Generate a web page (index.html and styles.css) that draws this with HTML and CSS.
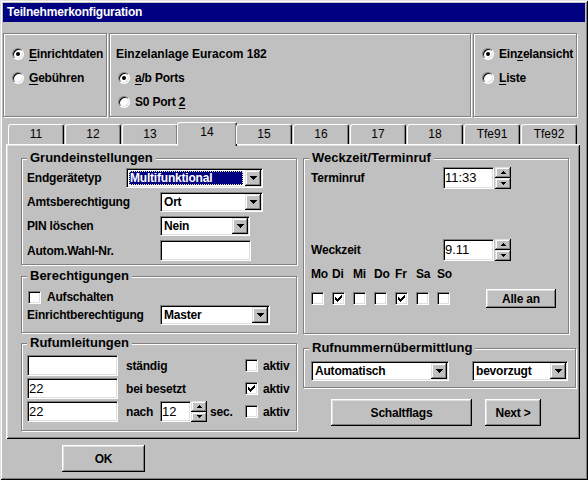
FILE: index.html
```html
<!DOCTYPE html>
<html lang="de">
<head>
<meta charset="utf-8">
<title>Teilnehmerkonfiguration</title>
<link rel="stylesheet" href="styles.css">
</head>
<body>
<div class="win">
  <div class="title">Teilnehmerkonfiguration</div>

  <div class="top">
    <div class="etch tg tg1">
      <div class="opt"><span class="radio on"></span><span><u>E</u>inrichtdaten</span></div>
      <div class="opt"><span class="radio"></span><span><u>G</u>ebühren</span></div>
    </div>
    <div class="etch tg tg2">
      <div class="opt head"><span>Einzelanlage Euracom 182</span></div>
      <div class="opt sub"><span class="radio on"></span><span><u>a</u>/b Ports</span></div>
      <div class="opt sub"><span class="radio"></span><span>S0 Port <u>2</u></span></div>
    </div>
    <div class="etch tg tg3">
      <div class="opt"><span class="radio on"></span><span>Ein<u>z</u>elansicht</span></div>
      <div class="opt"><span class="radio"></span><span><u>L</u>iste</span></div>
    </div>
  </div>

  <div class="tabs">
    <div class="tab">11</div>
    <div class="tab">12</div>
    <div class="tab">13</div>
    <div class="tab sel">14</div>
    <div class="tab">15</div>
    <div class="tab">16</div>
    <div class="tab">17</div>
    <div class="tab">18</div>
    <div class="tab">Tfe91</div>
    <div class="tab">Tfe92</div>
  </div>

  <div class="panel">
    <div class="col lcol">
      <fieldset class="g1">
        <legend>Grundeinstellungen</legend>
        <div class="rows">
          <div class="row"><span class="lab w99">Endgerätetyp</span>
            <div class="combo" style="width:137px"><span class="val sel">Multifunktional</span><span class="dd"><svg width="7" height="4" viewBox="0 0 7 4"><path d="M0 0h7v1H0zM1 1h5v1H1zM2 2h3v1H2zM3 3h1v1H3z"/></svg></span></div>
          </div>
          <div class="row"><span class="lab w133">Amtsberechtigung</span>
            <div class="combo" style="width:103px"><span class="val">Ort</span><span class="dd"><svg width="7" height="4" viewBox="0 0 7 4"><path d="M0 0h7v1H0zM1 1h5v1H1zM2 2h3v1H2zM3 3h1v1H3z"/></svg></span></div>
          </div>
          <div class="row"><span class="lab w133">PIN löschen</span>
            <div class="combo" style="width:90px"><span class="val">Nein</span><span class="dd"><svg width="7" height="4" viewBox="0 0 7 4"><path d="M0 0h7v1H0zM1 1h5v1H1zM2 2h3v1H2zM3 3h1v1H3z"/></svg></span></div>
          </div>
          <div class="row r21"><span class="lab w133">Autom.Wahl-Nr.</span>
            <div class="edit" style="width:91px"></div>
          </div>
        </div>
      </fieldset>

      <fieldset class="g2">
        <legend>Berechtigungen</legend>
        <div class="row r16"><span class="cb ml1"></span><span class="cbl">Aufschalten</span></div>
        <div class="row"><span class="lab w133">Einrichtberechtigung</span>
          <div class="combo" style="width:110px"><span class="val">Master</span><span class="dd"><svg width="7" height="4" viewBox="0 0 7 4"><path d="M0 0h7v1H0zM1 1h5v1H1zM2 2h3v1H2zM3 3h1v1H3z"/></svg></span></div>
        </div>
      </fieldset>

      <fieldset class="g3">
        <legend>Rufumleitungen</legend>
        <div class="rows r-gap2">
          <div class="row r21">
            <div class="edit" style="width:91px"></div>
            <span class="rlab">ständig</span>
            <span class="cb"></span><span class="cbl">aktiv</span>
          </div>
          <div class="row r21">
            <div class="edit" style="width:91px">22</div>
            <span class="rlab">bei besetzt</span>
            <span class="cb"><svg width="7" height="7" viewBox="0 0 7 7"><path d="M0 2h1v3H0zM1 3h1v3H1zM2 4h1v3H2zM3 3h1v3H3zM4 2h1v3H4zM5 1h1v3H5zM6 0h1v3H6z"/></svg></span><span class="cbl">aktiv</span>
          </div>
          <div class="row r21">
            <div class="edit" style="width:91px">22</div>
            <span class="nach">nach</span>
            <div class="edit" style="width:31px">12</div>
            <div class="spin"><span class="sb"><svg width="5" height="3" viewBox="0 0 5 3"><path d="M2 0h1v1H2zM1 1h3v1H1zM0 2h5v1H0z"/></svg></span><span class="sb"><svg width="5" height="3" viewBox="0 0 5 3"><path d="M0 0h5v1H0zM1 1h3v1H1zM2 2h1v1H2z"/></svg></span></div>
            <span class="sec">sec.</span>
            <span class="cb"></span><span class="cbl">aktiv</span>
          </div>
        </div>
      </fieldset>
    </div>

    <div class="col rcol">
      <fieldset class="wz">
        <legend>Weckzeit/Terminruf</legend>
        <div class="row r22 ml2"><span class="lab w132">Terminruf</span>
          <div class="edit" style="width:51px">11:33</div>
          <div class="spin ml1"><span class="sb"><svg width="5" height="3" viewBox="0 0 5 3"><path d="M2 0h1v1H2zM1 1h3v1H1zM0 2h5v1H0z"/></svg></span><span class="sb"><svg width="5" height="3" viewBox="0 0 5 3"><path d="M0 0h5v1H0zM1 1h3v1H1zM2 2h1v1H2z"/></svg></span></div>
        </div>
        <div class="row r22 ml2 wk"><span class="lab w132">Weckzeit</span>
          <div class="edit" style="width:51px">9.11</div>
          <div class="spin ml1"><span class="sb"><svg width="5" height="3" viewBox="0 0 5 3"><path d="M2 0h1v1H2zM1 1h3v1H1zM0 2h5v1H0z"/></svg></span><span class="sb"><svg width="5" height="3" viewBox="0 0 5 3"><path d="M0 0h5v1H0zM1 1h3v1H1zM2 2h1v1H2z"/></svg></span></div>
        </div>
        <div class="days ml2">
          <span>Mo</span><span>Di</span><span>Mi</span><span>Do</span><span>Fr</span><span>Sa</span><span>So</span>
        </div>
        <div class="dayrow ml2">
          <div class="days dchk">
            <span class="cb"></span>
            <span class="cb"><svg width="7" height="7" viewBox="0 0 7 7"><path d="M0 2h1v3H0zM1 3h1v3H1zM2 4h1v3H2zM3 3h1v3H3zM4 2h1v3H4zM5 1h1v3H5zM6 0h1v3H6z"/></svg></span>
            <span class="cb"></span>
            <span class="cb"></span>
            <span class="cb"><svg width="7" height="7" viewBox="0 0 7 7"><path d="M0 2h1v3H0zM1 3h1v3H1zM2 4h1v3H2zM3 3h1v3H3zM4 2h1v3H4zM5 1h1v3H5zM6 0h1v3H6z"/></svg></span>
            <span class="cb"></span>
            <span class="cb"></span>
          </div>
          <div class="btn alle">Alle an</div>
        </div>
      </fieldset>

      <fieldset class="rn">
        <legend>Rufnummernübermittlung</legend>
        <div class="row ml2">
          <div class="combo" style="width:138px"><span class="val">Automatisch</span><span class="dd"><svg width="7" height="4" viewBox="0 0 7 4"><path d="M0 0h7v1H0zM1 1h5v1H1zM2 2h3v1H2zM3 3h1v1H3z"/></svg></span></div>
          <div class="combo c2" style="width:96px"><span class="val">bevorzugt</span><span class="dd"><svg width="7" height="4" viewBox="0 0 7 4"><path d="M0 0h7v1H0zM1 1h5v1H1zM2 2h3v1H2zM3 3h1v1H3z"/></svg></span></div>
        </div>
      </fieldset>

      <div class="btnrow">
        <div class="btn schalt">Schaltflags</div>
        <div class="btn next">Next &gt;</div>
      </div>
    </div>
  </div>

  <div class="foot"><div class="btn ok">OK</div></div>
</div>
</body>
</html>
```

FILE: styles.css
```css
* { box-sizing: border-box; }
html, body { margin: 0; padding: 0; }
body {
  width: 588px;
  height: 480px;
  overflow: hidden;
  background: #c0c0c0;
  font-family: "Liberation Sans", Arial, sans-serif;
  font-size: 12px;
  font-weight: bold;
  letter-spacing: -0.2px;
  color: #000;
}
u { text-decoration: underline; text-underline-offset: 2px; }
svg { display: block; fill: #000; shape-rendering: crispEdges; }

.win {
  width: 588px;
  height: 480px;
  padding: 3px;
  background: #c0c0c0;
  display: flex;
  flex-direction: column;
  box-shadow: inset 1px 1px 0 #dfdfdf, inset -1px -1px 0 #000,
              inset 2px 2px 0 #fff, inset -2px -2px 0 #808080;
}
.title {
  height: 19px;
  background: #000080;
  color: #fff;
  line-height: 19px;
  padding-left: 4px;
  white-space: nowrap;
}

/* top option groups */
.top { display: flex; margin-top: 11px; height: 84px; }
.etch { border: 1px solid #808080; box-shadow: inset 1px 1px 0 #fff, 1px 1px 0 #fff; }
.tg {
  height: 84px;
  padding: 12px 0 0 8px;
  display: flex;
  flex-direction: column;
  gap: 8px;
}
.tg1 { width: 104px; }
.tg2 { width: 362px; margin-left: 2px; padding-left: 6px; }
.tg2 .head { letter-spacing: 0; }
.tg2 .sub { margin-left: 2px; }
.tg3 { width: 104px; margin-left: 2px; }
.opt { display: flex; align-items: center; height: 16px; gap: 5px; white-space: nowrap; }

.radio {
  flex: none;
  position: relative;
  width: 12px;
  height: 12px;
  border-radius: 50%;
  background: #fff;
  border: 1px solid;
  border-color: #808080 #fff #fff #808080;
  box-shadow: inset 1px 1px 0 #000, inset -1px -1px 0 #dfdfdf;
}
.radio.on::after {
  content: "";
  position: absolute;
  left: 3px;
  top: 3px;
  width: 4px;
  height: 4px;
  border-radius: 50%;
  background: #000;
}

/* tabs */
.tabs {
  display: flex;
  align-items: flex-end;
  height: 22px;
  margin: 5px 0 0 5px;
  position: relative;
  z-index: 1;
}
.tab {
  flex: none;
  width: 56px;
  height: 20px;
  margin-right: 1px;
  border-top: 1px solid #fff;
  border-left: 1px solid #fff;
  border-right: 1px solid #000;
  border-radius: 3px 3px 0 0;
  box-shadow: inset -1px 0 0 #808080;
  background: #c0c0c0;
  text-align: center;
  font-weight: normal;
  font-size: 12px;
  letter-spacing: 0;
  line-height: 19px;
}
.tab.sel {
  width: 60px;
  height: 24px;
  margin: 0 -1px -2px -2px;
  line-height: 19px;
}

/* panel */
.panel {
  display: flex;
  width: 574px;
  height: 295px;
  margin-left: 3px;
  padding: 6px 0 0 15px;
  box-shadow: inset 1px 1px 0 #fff, inset -1px -1px 0 #000,
              inset 2px 2px 0 #dfdfdf, inset -2px -2px 0 #808080;
}
.col { display: flex; flex-direction: column; }
.lcol { width: 277px; }
.rcol { width: 274px; margin-left: 5px; }

fieldset {
  margin: 0;
  padding: 0 5px;
  min-width: 0;
  border: 1px solid #808080;
  box-shadow: inset 1px 1px 0 #fff, 1px 1px 0 #fff;
}
legend {
  padding: 0 3px;
  font-size: 13px;
  line-height: 16px;
  font-weight: bold;
  letter-spacing: 0;
  background: #c0c0c0;
  white-space: nowrap;
}
.rows { display: flex; flex-direction: column; gap: 4px; }
.rows.r-gap2 { gap: 2px; }
.row { display: flex; align-items: center; height: 20px; white-space: nowrap; }
.row.r21 { height: 21px; }
.row.r22 { height: 22px; }
.row.r16 { height: 16px; }
.lab { flex: none; }
.w99 { width: 99px; }
.w132 { width: 132px; }
.w133 { width: 133px; }
.ml1 { margin-left: 1px; }
.ml2 { margin-left: 2px; }

.g1 { width: 276px; padding-top: 2px; padding-bottom: 3px; }
.g2 { width: 276px; margin-top: 3px; padding-top: 5px; padding-bottom: 7px; }
.g3 { width: 276px; margin-top: 2px; padding-top: 4px; padding-bottom: 8px; }

/* controls */
.combo {
  flex: none;
  display: flex;
  height: 20px;
  padding: 1px;
  background: #fff;
  border: 1px solid;
  border-color: #808080 #fff #fff #808080;
  box-shadow: inset 1px 1px 0 #000, inset -1px -1px 0 #dfdfdf;
}
.combo .val {
  flex: 1;
  min-width: 0;
  padding-left: 2px;
  line-height: 16px;
  overflow: hidden;
}
.combo .val.sel {
  margin: 1px 2px 1px 1px;
  padding-left: 1px;
  line-height: 14px;
  background: #000080;
  color: #fff;
  outline: 1px dotted #e8e8a0;
  outline-offset: -1px;
}
.dd, .sb {
  flex: none;
  display: flex;
  align-items: center;
  justify-content: center;
  background: #c0c0c0;
  box-shadow: inset -1px -1px 0 #000, inset 1px 1px 0 #dfdfdf,
              inset -2px -2px 0 #808080, inset 2px 2px 0 #fff;
}
.dd { width: 16px; height: 16px; }
.edit {
  flex: none;
  display: flex;
  align-items: center;
  height: 100%;
  padding: 0 1px 1px 1px;
  background: #fff;
  border: 1px solid;
  border-color: #808080 #fff #fff #808080;
  box-shadow: inset 1px 1px 0 #000, inset -1px -1px 0 #dfdfdf;
  font-weight: normal;
  font-size: 13px;
  letter-spacing: 0;
}
.spin { flex: none; display: flex; flex-direction: column; width: 16px; height: 100%; }
.spin .sb { flex: 1; }
.cb {
  flex: none;
  display: flex;
  align-items: center;
  justify-content: center;
  width: 13px;
  height: 13px;
  background: #fff;
  border: 1px solid;
  border-color: #808080 #fff #fff #808080;
  box-shadow: inset 1px 1px 0 #000, inset -1px -1px 0 #dfdfdf;
}
.cbl { margin-left: 6px; }
.g3 .cbl { margin-left: 5px; }
.rlab { width: 127px; padding-left: 8px; flex: none; }
.nach { width: 42px; padding-left: 8px; flex: none; }
.sec { width: 38px; padding-left: 3px; flex: none; }

.btn {
  flex: none;
  display: flex;
  align-items: center;
  justify-content: center;
  background: #c0c0c0;
  box-shadow: inset -1px -1px 0 #000, inset 1px 1px 0 #fff,
              inset -2px -2px 0 #808080, inset 2px 2px 0 #dfdfdf;
  white-space: nowrap;
}

/* right column */
.wz { width: 266px; margin-top: 0; padding-top: 1px; padding-bottom: 25px; }
.wk { margin-top: 50px; }
.days { display: grid; grid-template-columns: repeat(7, 21px); line-height: 16px; margin-top: 5px; }
.dayrow { display: flex; align-items: center; height: 19px; margin-top: 7px; }
.days.dchk { margin-top: 0; align-items: center; }
.alle { width: 70px; height: 19px; margin-left: 28px; }
.rn { width: 273px; margin-top: 6px; padding-top: 5px; padding-bottom: 6px; }
.c2 { margin-left: 23px; }
.btnrow { display: flex; margin-top: 11px; }
.schalt { width: 141px; height: 27px; margin-left: 28px; }
.next { width: 56px; height: 27px; margin-left: 13px; }

.foot { margin: 6px 0 0 59px; }
.ok { width: 83px; height: 27px; }
```
